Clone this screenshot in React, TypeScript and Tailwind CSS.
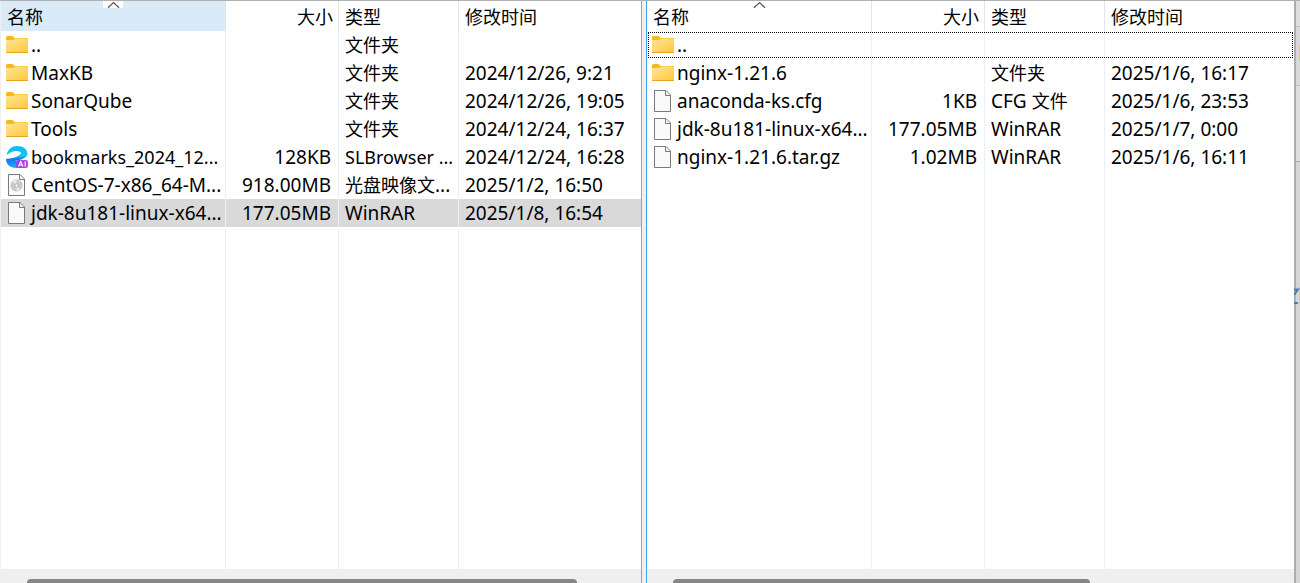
import React from 'react';

type Entry = {
  icon: 'folder' | 'file' | 'disc' | 'browser';
  name: string;
  size?: string;
  type?: string;
  modified?: string;
  state?: 'selected' | 'focused';
  compact?: boolean;
};

const localFiles: Entry[] = [
  { icon: 'folder', name: '..', type: '文件夹' },
  { icon: 'folder', name: 'MaxKB', type: '文件夹', modified: '2024/12/26, 9:21' },
  { icon: 'folder', name: 'SonarQube', type: '文件夹', modified: '2024/12/26, 19:05' },
  { icon: 'folder', name: 'Tools', type: '文件夹', modified: '2024/12/24, 16:37' },
  { icon: 'browser', name: 'bookmarks_2024_12...', size: '128KB', type: 'SLBrowser ...', modified: '2024/12/24, 16:28', compact: true },
  { icon: 'disc', name: 'CentOS-7-x86_64-M...', size: '918.00MB', type: '光盘映像文...', modified: '2025/1/2, 16:50' },
  { icon: 'file', name: 'jdk-8u181-linux-x64...', size: '177.05MB', type: 'WinRAR', modified: '2025/1/8, 16:54', state: 'selected' },
];

const remoteFiles: Entry[] = [
  { icon: 'folder', name: '..', state: 'focused' },
  { icon: 'folder', name: 'nginx-1.21.6', type: '文件夹', modified: '2025/1/6, 16:17' },
  { icon: 'file', name: 'anaconda-ks.cfg', size: '1KB', type: 'CFG 文件', modified: '2025/1/6, 23:53' },
  { icon: 'file', name: 'jdk-8u181-linux-x64...', size: '177.05MB', type: 'WinRAR', modified: '2025/1/7, 0:00' },
  { icon: 'file', name: 'nginx-1.21.6.tar.gz', size: '1.02MB', type: 'WinRAR', modified: '2025/1/6, 16:11' },
];

const FolderIcon = () => (
  <svg viewBox="0 0 22 22" className="w-[22px] h-[22px] shrink-0" aria-hidden="true">
    <defs>
      <linearGradient id="folder" x1="0" y1="0" x2="1" y2="1">
        <stop offset="0" stopColor="#ffe69a" />
        <stop offset="1" stopColor="#ffc83a" />
      </linearGradient>
    </defs>
    <path d="M0 3.500Q0 2 1.500 2H6.500L8.500 4H21Q22 4 22 5V8H0Z" fill="#f9b81c" />
    <path d="M0 6H7L9 4.500H21.500Q22 4.500 22 5V18.500H0Z" fill="url(#folder)" />
    <path d="M0 18H22Q22 19 21 19H1Q0 19 0 18Z" fill="#e6a21c" />
  </svg>
);

const FileIcon = ({ disc }: { disc?: boolean }) => (
  <svg viewBox="0 0 22 22" className="w-[22px] h-[22px] shrink-0" aria-hidden="true">
    <path d="M2.500 .5H14L18.500 5V21.500H2.500Z" fill="#fafafa" stroke="#7a7a7a" />
    <path d="M13.500 .5V5.500H18.500" fill="none" stroke="#7a7a7a" />
    {disc && (
      <>
        <circle cx="10.500" cy="11.500" r="5.500" fill="#c9cccf" stroke="#a9adb0" strokeWidth=".6" />
        <path d="M10.500 11.500L7 7.500A5.300 5.300 0 0 1 10.500 6.200ZM10.500 11.500L14 15.500A5.300 5.300 0 0 1 10.500 16.800Z" fill="#e9ebec" />
        <circle cx="10.500" cy="11.500" r="1.700" fill="#fff" stroke="#94989b" strokeWidth=".7" />
      </>
    )}
  </svg>
);

const BrowserIcon = () => (
  <svg viewBox="0 0 22 22" className="w-[22px] h-[22px] shrink-0" aria-hidden="true">
    <defs>
      <linearGradient id="swoosh" x1="0" y1="0" x2="0" y2="1">
        <stop offset="0" stopColor="#14b8f6" />
        <stop offset=".45" stopColor="#12c8f2" />
        <stop offset=".6" stopColor="#1a74ee" />
        <stop offset="1" stopColor="#16b4f4" />
      </linearGradient>
      <linearGradient id="ai" x1="0" y1="0" x2="1" y2="0">
        <stop offset="0" stopColor="#7a4df2" />
        <stop offset="1" stopColor="#d23cdc" />
      </linearGradient>
    </defs>
    <path
      d="M.5 9C2 3 6 0 11 0C17 0 21.500 3 21.500 8C21 12 14 14.500 9.500 14.500C10.500 17 15 18 19 17C17 20.500 13.500 22 10 22C4 22 0 18.500 0 13C3 12.800 12 11.500 15 7.500C15.500 6 13 5 10 5C6 5 3 7.500 .5 9Z"
      fill="url(#swoosh)"
    />
    <rect x="10" y="14" width="12" height="8" rx="2" fill="url(#ai)" />
    <path d="M12.500 20.500L14.700 15.500L16.900 20.500M13.400 19H16M19.200 15.500V20.500" fill="none" stroke="#fff" strokeWidth="1.100" />
  </svg>
);

const EntryIcon = ({ icon }: { icon: Entry['icon'] }) => {
  if (icon === 'folder') return <FolderIcon />;
  if (icon === 'browser') return <BrowserIcon />;
  return <FileIcon disc={icon === 'disc'} />;
};

// Chinese runs are set a step smaller than the Latin ones beside them
const Label = ({ text }: { text: string }) => (
  <>
    {text.split(/([\u4e00-\u9fff]+)/).filter(Boolean).map((part, i) =>
      /[\u4e00-\u9fff]/.test(part) ? (
        <span key={i} className="text-[18px]">{part}</span>
      ) : (
        part
      )
    )}
  </>
);

const columns = [
  { title: '名称', align: 'text-left' },
  { title: '大小', align: 'text-right' },
  { title: '类型', align: 'text-left' },
  { title: '修改时间', align: 'text-left' },
];

const rowStates = {
  selected: 'bg-[#d9d9d9]',
  focused: 'outline-1 outline-dotted outline-black -outline-offset-2',
};

const cell = 'h-7 p-0 border-r border-[#e8f1fb] whitespace-nowrap';

const FilePane = ({ label, files, active }: { label: string; files: Entry[]; active?: boolean }) => (
  <section aria-label={label} className={`min-w-0 flex flex-col ${active ? 'flex-[640]' : 'flex-[647]'}`}>
    <div className="flex-1 min-h-0 bg-white">
      <table className="w-full h-full table-fixed border-separate border-spacing-0">
        <colgroup>
          <col className="w-[225px]" />
          <col className="w-[113px]" />
          <col className="w-[120px]" />
          <col />
        </colgroup>
        <thead>
          <tr>
            {columns.map((col, i) => (
              <th
                key={col.title}
                className={`relative h-[30px] p-0 font-normal ${i < 3 ? 'border-r border-[#e5e5e5]' : ''} ${active && i === 0 ? 'bg-[#d9ebf9]' : ''}`}
              >
                <button type="button" className={`block w-full h-[30px] pl-[6px] pr-[5px] text-[18px] leading-8 ${col.align}`}>
                  {col.title}
                </button>
                {i === 0 && (
                  <span className="absolute top-0 left-1/2 -translate-x-1/2 w-5 h-[7px] bg-white">
                    <svg viewBox="0 0 20 7" className="w-5 h-[7px]" aria-hidden="true">
                      <path d="M5 6.800L10.500 1.500L16 6.800" fill="none" stroke="#555" strokeWidth="1.200" />
                    </svg>
                  </span>
                )}
              </th>
            ))}
          </tr>
        </thead>
        <tbody>
          {files.map((file) => (
            <tr key={file.name} className={file.state ? rowStates[file.state] : ''}>
              <td className={cell}>
                <div className="flex items-center gap-[3px] pl-[5px] h-7">
                  <EntryIcon icon={file.icon} />
                  <span className={file.compact ? 'text-[18px]' : ''}>{file.name}</span>
                </div>
              </td>
              <td className={`${cell} text-right`}>
                <div className="h-7 pr-[7px]">{file.size}</div>
              </td>
              <td className={cell}>
                <div className={`h-7 pl-[6px] ${file.compact ? 'text-[18px]' : ''}`}>
                  <Label text={file.type ?? ''} />
                </div>
              </td>
              <td className="h-7 p-0 whitespace-nowrap">
                <div className="h-7 pl-[6px]">{file.modified}</div>
              </td>
            </tr>
          ))}
          <tr aria-hidden="true">
            <td className="p-0 border-r border-[#e8f1fb]" />
            <td className="p-0 border-r border-[#e8f1fb]" />
            <td className="p-0 border-r border-[#e8f1fb]" />
            <td className="p-0" />
          </tr>
        </tbody>
      </table>
    </div>
    <div className="h-[14px] shrink-0 bg-[#efefef] pt-[10px] overflow-hidden">
      <div className={`h-2 ml-[26px] rounded bg-[#858585] ${active ? 'w-[86%]' : 'w-[64.5%]'}`} />
    </div>
  </section>
);

export default function App() {
  return (
    <main className="flex h-screen overflow-hidden border-t border-[#b0b0b0] bg-[#efefef] text-black text-[19px] leading-7 font-['Noto_Sans','Noto_Sans_CJK_SC',sans-serif]">
      <div className="flex flex-1 min-w-0 border-l border-[#efefef]">
        <FilePane label="本地" files={localFiles} active />
        <div className="w-[6px] shrink-0 border-l border-[#a0a0a0] border-r border-r-[#3fa3ea] bg-[#f0eff0]" />
        <FilePane label="远程" files={remoteFiles} />
      </div>
      <div className="relative w-[6px] shrink-0 border-l-2 border-l-[#adadad] bg-[#d6d6d6]">
        <div className="h-[26px] border-b border-[#c2c2c2] bg-[#dedede]" />
        <div className="h-[59px] border-b border-[#c2c2c2] bg-[#d9d9d9]" />
        <div className="h-[76px] border-b border-[#a8a8a8] bg-[#dedede]" />
        <svg viewBox="0 0 6 260" className="absolute -left-[2px] top-[44px] w-[6px] h-[260px]" aria-hidden="true">
          <path d="M5 0H6V16H5Z" fill="#dcc48c" />
          <path d="M5 242H6V259H5Z" fill="#d8bfb2" />
          <path d="M0 244.500H4L0 250M0 258H4" fill="none" stroke="#4a7db8" strokeWidth="2" />
        </svg>
      </div>
    </main>
  );
}
